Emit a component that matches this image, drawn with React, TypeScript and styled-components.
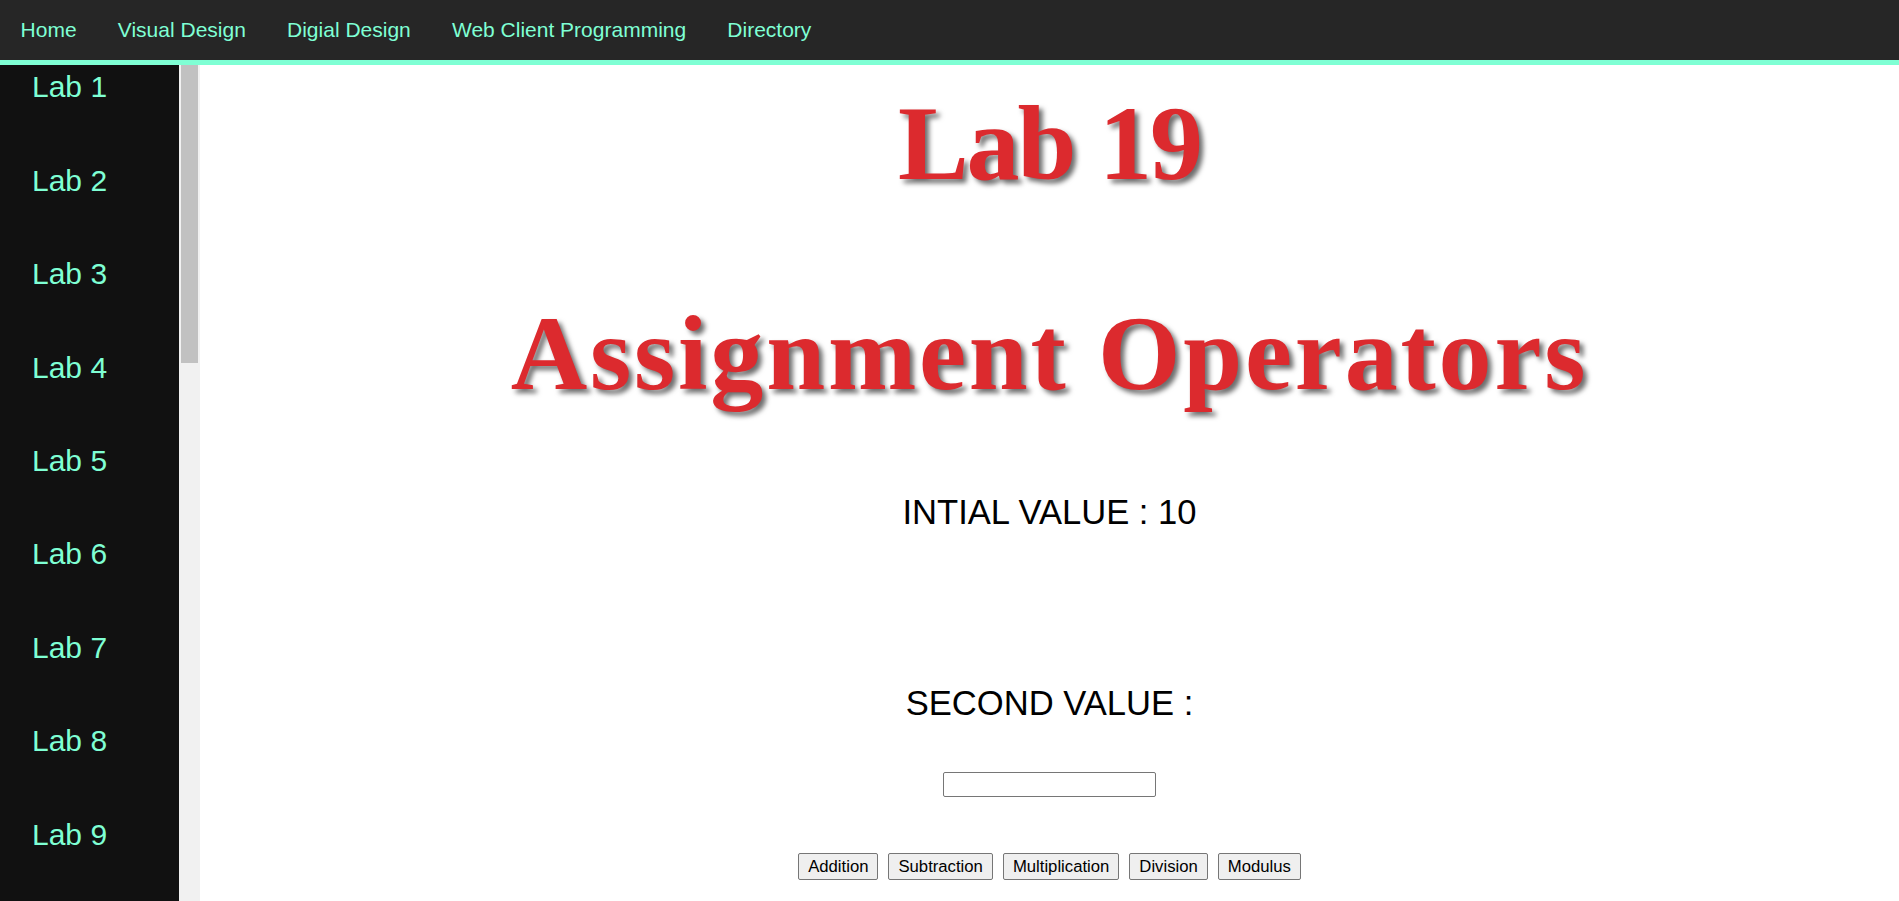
import styled, { createGlobalStyle } from "styled-components";

const NAV_LINKS = ["Home", "Visual Design", "Digial Design", "Web Client Programming", "Directory"];
const LABS = Array.from({ length: 25 }, (_, i) => `Lab ${i + 1}`);
const OPERATIONS = ["Addition", "Subtraction", "Multiplication", "Division", "Modulus"];

export default function App() {
  return (
    <>
      <GlobalStyle />
      <Page>
        <TopNav>
          {NAV_LINKS.map((link) => (
            <NavLink key={link} href="#">
              {link}
            </NavLink>
          ))}
        </TopNav>
        <Body>
          <SideBar>
            <LabList>
              {LABS.map((lab) => (
                <LabLink key={lab} href="#">
                  {lab}
                </LabLink>
              ))}
            </LabList>
            <ScrollTrack>
              <ScrollThumb />
            </ScrollTrack>
          </SideBar>
          <Main>
            <Title $top={26} $spacing={-2}>
              Lab 19
            </Title>
            <Title $top={104} $spacing={2.8}>
              Assignment Operators
            </Title>
            <ValueLabel $top={85.5}>INTIAL VALUE : 10</ValueLabel>
            <ValueLabel $top={152}>SECOND VALUE :</ValueLabel>
            <ValueInput type="text" />
            <ButtonRow>
              {OPERATIONS.map((op) => (
                <OpButton key={op}>{op}</OpButton>
              ))}
            </ButtonRow>
          </Main>
        </Body>
      </Page>
    </>
  );
}

const mint = "#7fffd4";

const GlobalStyle = createGlobalStyle`
  html, body {
    margin: 0;
    padding: 0;
    overflow: hidden;
  }
  body {
    font-family: "Liberation Sans", Arial, sans-serif;
    background: #ffffff;
  }
`;

const Page = styled.div`
  display: flex;
  flex-direction: column;
  height: 100vh;
`;

const TopNav = styled.nav`
  display: flex;
  height: 60px;
  background-color: #262626;
  border-bottom: 5px solid ${mint};
  flex-shrink: 0;
`;

const NavLink = styled.a`
  padding: 0 20.6px;
  line-height: 60px;
  font-size: 21px;
  color: ${mint};
  text-decoration: none;
`;

const Body = styled.div`
  display: flex;
  flex: 1;
  min-height: 0;
`;

const SideBar = styled.aside`
  display: flex;
  width: 200px;
  flex-shrink: 0;
`;

const LabList = styled.div`
  display: flex;
  flex-direction: column;
  gap: 58.9px;
  flex: 1;
  box-sizing: border-box;
  padding: 5.4px 0 60px;
  background-color: #111111;
  overflow-y: auto;
  scrollbar-width: none;
`;

const ScrollTrack = styled.div`
  width: 21px;
  flex-shrink: 0;
  box-sizing: border-box;
  padding: 0 2px;
  background-color: #f1f1f1;
`;

const ScrollThumb = styled.div`
  height: 298px;
  background-color: #c1c1c1;
`;

const LabLink = styled.a`
  display: block;
  padding-left: 32px;
  font-size: 30px;
  line-height: 34.5px;
  color: ${mint};
  text-decoration: none;
`;

const Main = styled.main`
  display: flex;
  flex-direction: column;
  align-items: center;
  flex: 1;
  overflow: hidden;
  text-align: center;
`;

const Title = styled.h1<{ $top: number; $spacing: number }>`
  margin: ${({ $top }) => $top}px 0 0;
  font-family: "Liberation Serif", "Times New Roman", serif;
  font-weight: bold;
  font-size: 106px;
  line-height: 106px;
  letter-spacing: ${({ $spacing }) => $spacing}px;
  color: #dc2a2e;
  text-shadow: 4px 4px 5px #6e6e6e;
  white-space: nowrap;
`;

const ValueLabel = styled.p<{ $top: number }>`
  margin: ${({ $top }) => $top}px 0 0;
  font-size: 34.6px;
  line-height: 39px;
  color: #000000;
`;

const ValueInput = styled.input`
  margin-top: 49.3px;
  width: 213px;
  height: 25px;
  box-sizing: border-box;
  border: 1px solid #767676;
  border-radius: 2px;
  padding: 2px 3px;
  font-size: 16.7px;
`;

const ButtonRow = styled.div`
  display: flex;
  gap: 10px;
  margin-top: 56px;
`;

const OpButton = styled.button`
  height: 27.5px;
  padding: 0 9px;
  font-family: "Liberation Sans", Arial, sans-serif;
  font-size: 16.7px;
  color: #000000;
  background-color: #efefef;
  border: 1px solid #767676;
  border-radius: 2px;
`;
